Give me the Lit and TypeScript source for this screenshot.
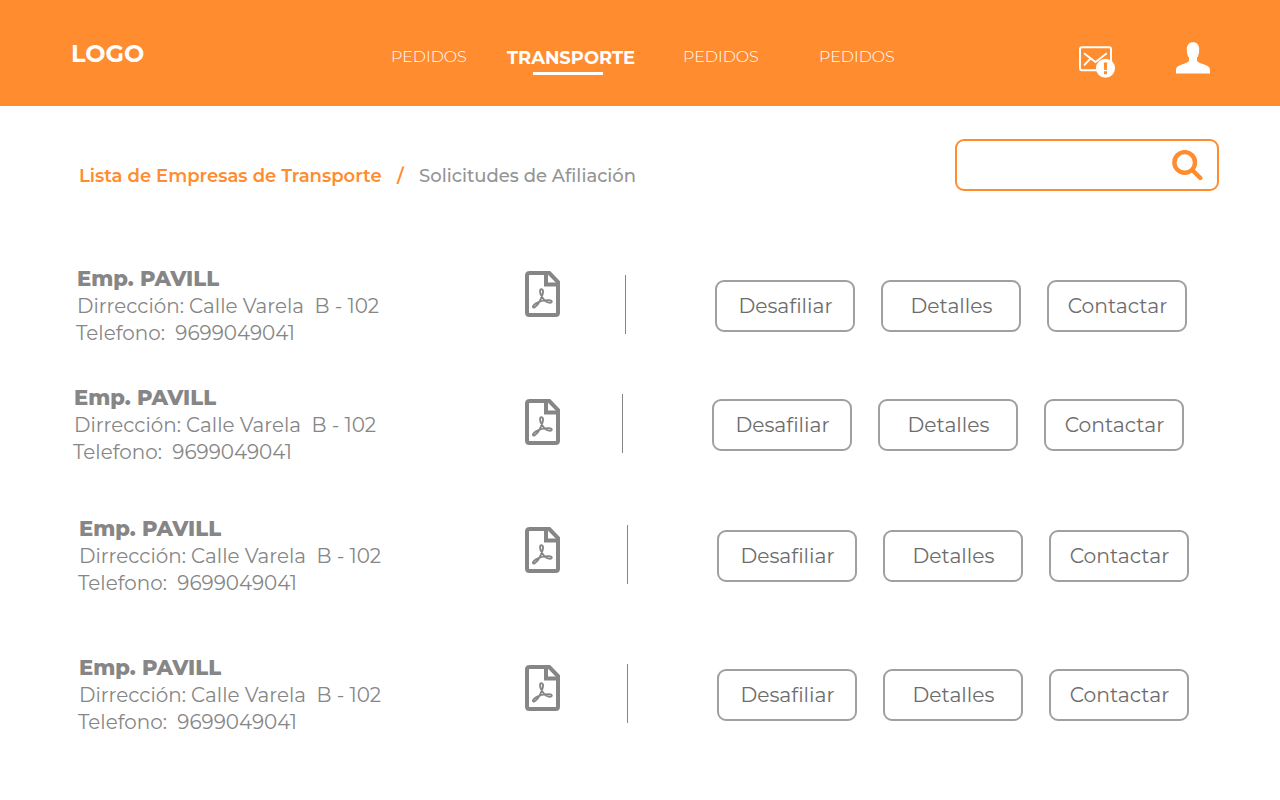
import { LitElement, html, css } from "lit";

interface Company {
  name: string;
  address: string;
  phone: string;
  gap: number;
  indent: number;
  iconShift: number;
}

const company = (gap: number, indent: number, iconShift: number): Company => ({
  name: "Emp. PAVILL",
  address: "Dirrección: Calle Varela\u00a0 B - 102",
  phone: "Telefono:\u00a0 9699049041",
  gap,
  indent,
  iconShift,
});

const COMPANIES: Company[] = [
  company(0, 76, 6),
  company(38, 73, 15),
  company(50, 78, 12),
  company(58, 78, 11),
];

const ACTIONS = ["Desafiliar", "Detalles", "Contactar"];

class CompanyRow extends LitElement {
  static properties = { company: { attribute: false } };
  declare company: Company;

  static styles = css`
    :host { display: block; }
    .row { display: flex; align-items: flex-start; height: 81px; color: #868686; }
    .info { white-space: nowrap; font-size: 19.9px; font-weight: 400; line-height: 27px; }
    .name { height: 28px; padding-left: 1px; font-size: 21.1px; font-weight: 800; }
    .address { padding-left: 1px; }
    .file { flex: none; width: 35px; height: 46px; }
    .rule { width: 1px; height: 59px; margin-top: 10px; background: #868686; }
    .actions { display: flex; gap: 26px; margin: 15px 0 0 89px; }
    button {
      box-sizing: border-box; width: 140px; height: 52px; padding: 0 0 0 1px; margin: 0;
      border: 2px solid #a0a0a0; border-radius: 9px; background: #fff;
      font: 400 20.3px/48px Montserrat, sans-serif; color: #6c6c6c; text-align: center;
      font-variant-ligatures: none;
    }
  `;

  render() {
    const c = this.company;
    return html`
      <div class="row" style="padding-left:${c.indent}px">
        <div class="info" style="width:${525 - c.indent}px">
          <div class="name">${c.name}</div>
          <div class="address">${c.address}</div>
          <div>${c.phone}</div>
        </div>
        <svg class="file" style="margin-top:${c.iconShift}px" viewBox="0 0 35 46" fill="none" stroke="#868686">
          <path d="M4 2H24.3L33 11V41.5Q33 44 30.5 44H4.5Q2 44 2 41.5V4.5Q2 2 4.5 2Z" stroke-width="4" />
          <path d="M21 3V13.5H33" stroke-width="4" />
          <path d="M16.7 18.2C14.4 17.8 14.8 22 16.3 24.4C18 28 21 31.7 24.8 31.7C27.8 31.4 27.4 29.2 24 29.1C19.5 29 14.5 30.2 10.6 32.6C7 35 7.4 37.2 9.5 36.3C12.3 34.8 15.8 28.5 17.3 24.2C18.4 21.2 18.4 18.5 16.7 18.2Z" stroke-width="1.9" />
        </svg>
        <div class="rule" style="margin-left:${c.indent - 11}px"></div>
        <div class="actions">${ACTIONS.map((a) => html`<button>${a}</button>`)}</div>
      </div>
    `;
  }
}
customElements.define("company-row", CompanyRow);

class AppRoot extends LitElement {
  static styles = css`
    :host { display: block; width: 1280px; height: 800px; overflow: hidden; background: #fff; font-family: Montserrat, sans-serif; }
    header { display: flex; height: 106px; background: #ff8c2e; color: #fff; white-space: nowrap; }
    .logo { width: 320px; padding: 39px 0 0 71px; box-sizing: border-box; font-size: 24px; font-weight: 750; line-height: 29px; }
    nav { display: flex; width: 758px; font-size: 15.9px; font-weight: 350; line-height: 20px; padding-left: 71px; box-sizing: border-box; }
    .item { width: 136px; padding-top: 47px; }
    .item.active { width: 176px; margin-left: -20px; padding-top: 48px; font-size: 17.9px; font-weight: 700; }
    .active::after { content: ""; display: block; width: 70px; height: 3px; margin: 4px 0 0 26px; background: #fff; }
    .mail { width: 37px; height: 33px; margin: 45px 0 0 0; }
    .user { width: 34px; height: 32px; margin: 42px 0 0 61px; }
    .bar { display: flex; height: 159px; font-size: 18px; line-height: 22px; white-space: nowrap; font-variant-ligatures: none; }
    .crumbs { box-sizing: border-box; display: flex; width: 955px; padding: 59px 0 0 79px; font-weight: 500; color: #949494; }
    .current { font-weight: 600; font-size: 18.05px; color: #ff8c2e; }
    .slash { width: 22px; margin-left: 15.5px; font-weight: 600; color: #ff8c2e; }
    .search { box-sizing: border-box; display: flex; justify-content: flex-end; width: 264px; height: 52px; margin-top: 33px; padding: 9px 14px 0 0; border: 2px solid #ff8c2e; border-radius: 9px; }
    .search svg { width: 31px; height: 31px; }
  `;

  render() {
    return html`
      <header>
        <div class="logo">LOGO</div>
        <nav>
          <div class="item">PEDIDOS</div>
          <div class="item active">TRANSPORTE</div>
          <div class="item">PEDIDOS</div>
          <div class="item">PEDIDOS</div>
        </nav>
        <svg class="mail" viewBox="0 0 37 33" fill="none" stroke="#fff">
          <rect x="2" y="2.2" width="31" height="23" rx="2" stroke-width="2" />
          <path d="M6 8.2L17.5 17L28.8 8.2M6 20.3L12.5 13.5" stroke-width="1.9" />
          <circle cx="27.5" cy="23.3" r="9.5" fill="#fff" stroke="none" />
          <path d="M25.8 17.5H29.2L28.8 25H26.2ZM26 26.3H29V29.2H26Z" fill="#ff8c2e" stroke="none" />
        </svg>
        <svg class="user" viewBox="0 0 34 32" fill="#fff">
          <path d="M17 0.3C21 0.3 23.2 3 23.2 7.5C23.2 11 22.5 14 21 15.8V18.5C21.2 20 23 20.6 26 21.8C31 23.5 34 24.5 34 28V31.5H0V28C0 24.5 3 23.5 8 21.8C11 20.6 12.8 20 13 18.5V15.8C11.5 14 10.8 11 10.8 7.5C10.8 3 13 0.3 17 0.3Z" />
        </svg>
      </header>
      <div class="bar">
        <div class="crumbs">
          <div class="current">Lista de Empresas de Transporte</div>
          <div class="slash">/</div>
          <div>Solicitudes de Afiliación</div>
        </div>
        <div class="search">
          <svg viewBox="0 0 31 31" fill="none" stroke="#ff8c2e">
            <circle cx="12.7" cy="12.4" r="10.3" stroke-width="4.4" />
            <path d="M20.5 20.3L28.3 28" stroke-width="4.4" stroke-linecap="round" />
          </svg>
        </div>
      </div>
      ${COMPANIES.map((c) => html`<company-row .company=${c} style="margin-top:${c.gap}px"></company-row>`)}
    `;
  }
}
customElements.define("app-root", AppRoot);
